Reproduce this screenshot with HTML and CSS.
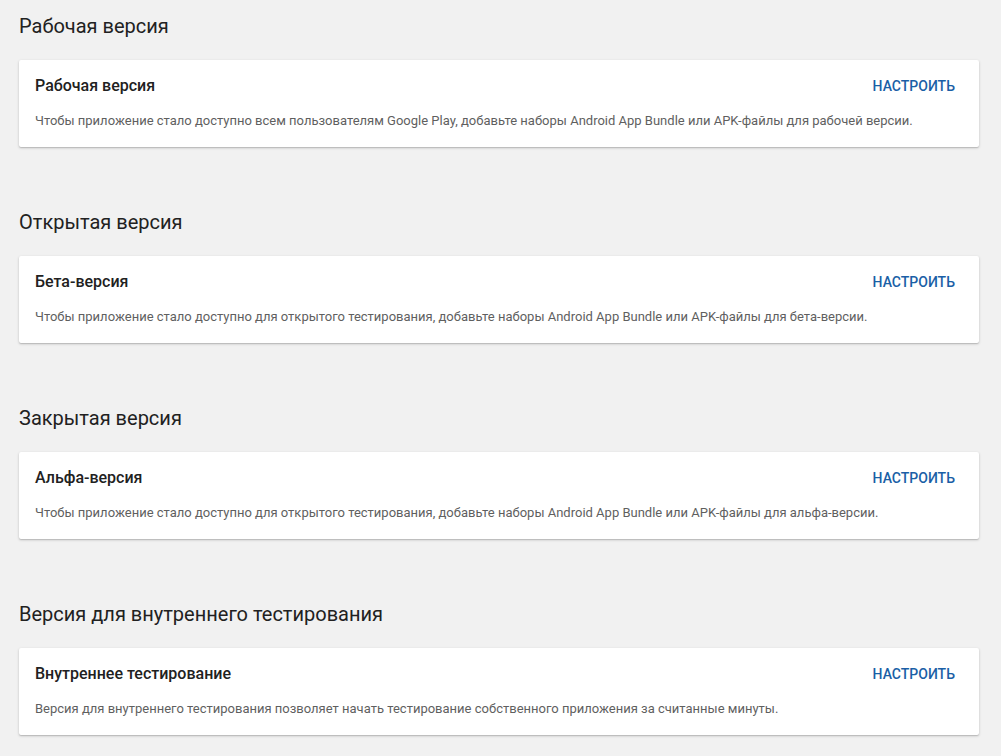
FILE: index.html
```html
<!DOCTYPE html>
<html lang="ru">
<head>
<meta charset="utf-8">
<link rel="stylesheet" href="styles.css">
</head>
<body>
<main class="page">
  <section class="track">
    <h2 class="track-heading">Рабочая версия</h2>
    <div class="card">
      <div class="card-head">
        <h3 class="card-title">Рабочая версия</h3>
        <button class="card-action">Настроить</button>
      </div>
      <p class="card-desc">Чтобы приложение стало доступно всем пользователям Google Play, добавьте наборы Android App Bundle или APK-файлы для рабочей версии.</p>
    </div>
  </section>
  <section class="track">
    <h2 class="track-heading">Открытая версия</h2>
    <div class="card">
      <div class="card-head">
        <h3 class="card-title">Бета-версия</h3>
        <button class="card-action">Настроить</button>
      </div>
      <p class="card-desc">Чтобы приложение стало доступно для открытого тестирования, добавьте наборы Android App Bundle или APK-файлы для бета-версии.</p>
    </div>
  </section>
  <section class="track">
    <h2 class="track-heading">Закрытая версия</h2>
    <div class="card">
      <div class="card-head">
        <h3 class="card-title">Альфа-версия</h3>
        <button class="card-action">Настроить</button>
      </div>
      <p class="card-desc">Чтобы приложение стало доступно для открытого тестирования, добавьте наборы Android App Bundle или APK-файлы для альфа-версии.</p>
    </div>
  </section>
  <section class="track">
    <h2 class="track-heading">Версия для внутреннего тестирования</h2>
    <div class="card">
      <div class="card-head">
        <h3 class="card-title">Внутреннее тестирование</h3>
        <button class="card-action">Настроить</button>
      </div>
      <p class="card-desc">Версия для внутреннего тестирования позволяет начать тестирование собственного приложения за считанные минуты.</p>
    </div>
  </section>
</main>
</body>
</html>
```

FILE: styles.css
```css
html, body {
  margin: 0;
  padding: 0;
  background: #f1f1f1;
  font-family: Roboto, "Liberation Sans", Arial, sans-serif;
  color: #212121;
}

.page {
  display: flex;
  flex-direction: column;
  gap: 61px;
  padding: 12px 22px 40px 19px;
}

.track {
  display: flex;
  flex-direction: column;
}

.track-heading {
  margin: 0 0 20px 0;
  font-size: 20px;
  line-height: 28px;
  font-weight: 400;
  color: #212121;
}

.card {
  background: #fff;
  border-radius: 2px;
  box-shadow: 0 1px 3px rgba(0,0,0,0.18), 0 1px 1px rgba(0,0,0,0.12);
  padding: 16px 16px 16px 16px;
  display: flex;
  flex-direction: column;
  gap: 15px;
}

.card-head {
  display: flex;
  align-items: center;
  justify-content: space-between;
  height: 20px;
}

.card-title {
  margin: 0;
  font-size: 16px;
  line-height: 20px;
  font-weight: 500;
  color: #212121;
}

.card-action {
  background: none;
  border: none;
  padding: 6px 8px;
  font-family: inherit;
  font-size: 14px;
  font-weight: 500;
  line-height: 20px;
  text-transform: uppercase;
  color: #1a5fa6;
  cursor: pointer;
}

.card-desc {
  margin: 0;
  font-size: 13px;
  line-height: 20px;
  color: #5f5f5f;
}
```
